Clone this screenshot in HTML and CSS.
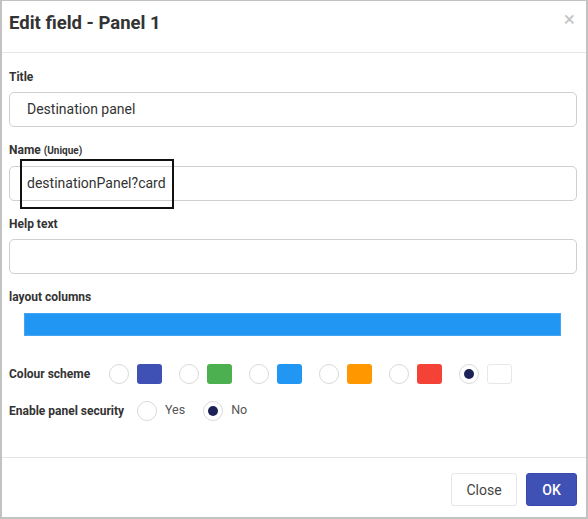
FILE: index.html
```html
<!DOCTYPE html>
<html>
<head>
<meta charset="utf-8">
<link rel="stylesheet" href="styles.css">
</head>
<body>
<div class="dialog">
  <div class="header">
    <h1 class="title">Edit field - Panel 1</h1>
    <span class="close-x">&times;</span>
  </div>
  <div class="content">
    <div class="field">
      <div class="label">Title</div>
      <div class="input">Destination panel</div>
    </div>
    <div class="field">
      <div class="label">Name <small>(Unique)</small></div>
      <div class="input-wrap">
        <div class="input">destinationPanel?card</div>
        <div class="highlight"></div>
      </div>
    </div>
    <div class="field">
      <div class="label">Help text</div>
      <div class="input"></div>
    </div>
    <div class="label">layout columns</div>
    <div class="bar"></div>
    <div class="row colour-row">
      <div class="label row-label">Colour scheme</div>
      <div class="options">
        <span class="radio"></span><span class="swatch indigo"></span>
        <span class="radio"></span><span class="swatch green"></span>
        <span class="radio"></span><span class="swatch blue"></span>
        <span class="radio"></span><span class="swatch orange"></span>
        <span class="radio"></span><span class="swatch red"></span>
        <span class="radio checked"></span><span class="swatch white"></span>
      </div>
    </div>
    <div class="row security-row">
      <div class="label row-label sec-label">Enable panel security</div>
      <div class="options">
        <span class="radio"></span><span class="opt-text">Yes</span>
        <span class="radio checked"></span><span class="opt-text">No</span>
      </div>
    </div>
  </div>
  <div class="footer">
    <button class="btn btn-close">Close</button>
    <button class="btn btn-ok">OK</button>
  </div>
</div>
</body>
</html>
```
FILE: styles.css
```css
html, body {
  margin: 0;
  padding: 0;
  background: #fff;
}
body {
  font-family: Roboto, "Liberation Sans", Arial, sans-serif;
  color: #333;
}
.dialog {
  width: 588px;
  height: 519px;
  box-sizing: border-box;
  border: 2px solid #c2c2c2;
  border-top-width: 1px;
  display: flex;
  flex-direction: column;
  background: #fff;
}
.header {
  height: 51px;
  flex: none;
  border-bottom: 1px solid #e5e5e5;
  display: flex;
  align-items: flex-start;
  justify-content: space-between;
  padding: 0 11px 0 7px;
}
.title {
  margin: 9px 0 0 0;
  font-size: 18.5px;
  font-weight: 700;
  line-height: 26px;
  color: #333;
}
.close-x {
  font-size: 21px;
  line-height: 20px;
  color: #c4c4c4;
  margin-top: 8px;
}
.content {
  flex: 1;
  padding: 16px 9px 0 7px;
}
.field {
  margin-bottom: 15px;
}
.label {
  font-size: 12px;
  font-weight: 700;
  line-height: 16px;
  color: #333;
}
.label small {
  font-size: 10px;
}
.field .label {
  margin-bottom: 7px;
}
.input-wrap {
  position: relative;
}
.input {
  height: 35px;
  box-sizing: border-box;
  border: 1px solid #cfcfcf;
  border-radius: 5px;
  padding: 0 17px;
  font-size: 14px;
  line-height: 33px;
  color: #333;
}
.highlight {
  position: absolute;
  left: 11px;
  top: -7px;
  width: 154px;
  height: 50px;
  box-sizing: border-box;
  border: 2px solid #111;
}
.bar {
  height: 23px;
  margin: 8px 16px 0 15px;
  background: #2196f3;
  border: 1px solid #42a5f5;
  box-sizing: border-box;
}
.row {
  display: flex;
  align-items: center;
  height: 20px;
}
.colour-row {
  margin-top: 28px;
}
.security-row {
  margin-top: 17px;
}
.row-label {
  width: 100px;
  flex: none;
}
.sec-label {
  width: 128px;
}
.options {
  display: flex;
  align-items: center;
}
.radio {
  width: 20px;
  height: 20px;
  box-sizing: border-box;
  border: 1px solid #d9d9d9;
  border-radius: 50%;
  display: flex;
  align-items: center;
  justify-content: center;
  flex: none;
}
.radio.checked::after {
  content: "";
  width: 10px;
  height: 10px;
  border-radius: 50%;
  background: #1c2257;
}
.swatch {
  width: 25px;
  height: 20px;
  border-radius: 3px;
  margin: 0 17px 0 8px;
  box-sizing: border-box;
  flex: none;
}
.indigo { background: #3f51b5; }
.green { background: #4caf50; }
.blue { background: #2196f3; }
.orange { background: #ff9800; }
.red { background: #f44336; }
.white { background: #fff; border: 1px solid #e8e8e8; }
.opt-text {
  font-size: 12.5px;
  color: #555;
  margin: -4px 18px 0 8px;
}
.footer {
  flex: none;
  border-top: 1px solid #e5e5e5;
  height: 60px;
  box-sizing: border-box;
  padding: 15px 9px 0 0;
  display: flex;
  justify-content: flex-end;
  align-items: flex-start;
  gap: 9px;
}
.btn {
  height: 33px;
  box-sizing: border-box;
  border-radius: 3px;
  font-family: Roboto, "Liberation Sans", Arial, sans-serif;
  font-size: 14px;
  padding: 0;
  cursor: pointer;
}
.btn-close {
  width: 66px;
  background: #fff;
  border: 1px solid #e6e6e6;
  color: #444;
}
.btn-ok {
  width: 51px;
  background: #3f51b5;
  border: 1px solid #3949ab;
  color: #fff;
  font-weight: 500;
}
```
